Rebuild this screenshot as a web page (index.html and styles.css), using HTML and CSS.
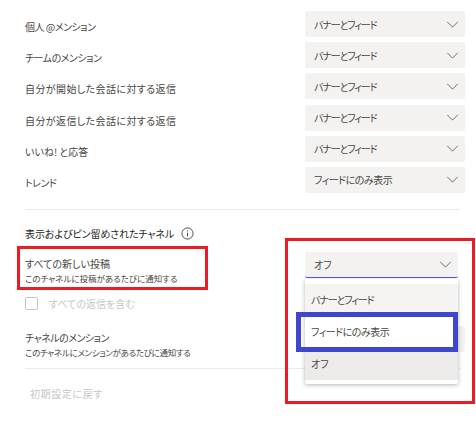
FILE: index.html
```html
<!DOCTYPE html>
<html lang="ja">
<head>
    <meta charset="UTF-8">
    <meta name="viewport" content="width=device-width, initial-scale=1.0">
    <title>通知の設定</title>
    <link rel="stylesheet" href="styles.css">
</head>
<body>
    <div class="page">
        <div class="rows">
            <div class="row"><span class="label tight">個人 @メンション</span><div class="select"><span class="tighter">バナーとフィード</span><svg class="chev" viewBox="0 0 14 8"><path d="M1 1l6 6 6-6"/></svg></div></div>
            <div class="row"><span class="label tight">チームのメンション</span><div class="select"><span class="tighter">バナーとフィード</span><svg class="chev" viewBox="0 0 14 8"><path d="M1 1l6 6 6-6"/></svg></div></div>
            <div class="row"><span class="label wide">自分が開始した会話に対する返信</span><div class="select"><span class="tighter">バナーとフィード</span><svg class="chev" viewBox="0 0 14 8"><path d="M1 1l6 6 6-6"/></svg></div></div>
            <div class="row"><span class="label wide">自分が返信した会話に対する返信</span><div class="select"><span class="tighter">バナーとフィード</span><svg class="chev" viewBox="0 0 14 8"><path d="M1 1l6 6 6-6"/></svg></div></div>
            <div class="row"><span class="label">いいね! と応答</span><div class="select"><span class="tighter">バナーとフィード</span><svg class="chev" viewBox="0 0 14 8"><path d="M1 1l6 6 6-6"/></svg></div></div>
            <div class="row"><span class="label tight">トレンド</span><div class="select"><span class="tight">フィードにのみ表示</span><svg class="chev" viewBox="0 0 14 8"><path d="M1 1l6 6 6-6"/></svg></div></div>
        </div>

        <hr class="divider">

        <h2 class="section-title"><span class="tight-title">表示およびピン留めされたチャネル</span>
            <svg class="info" viewBox="0 0 14 14"><circle cx="7" cy="7" r="6"/><path d="M7 6.2v4M7 3.6v1.2"/></svg>
        </h2>

        <div class="row channel-row">
            <div class="text-block">
                <div class="label">すべての新しい投稿</div>
                <div class="hint">このチャネルに投稿があるたびに通知する</div>
            </div>
            <div class="select select-open"><span>オフ</span><svg class="chev" viewBox="0 0 14 8"><path d="M1 1l6 6 6-6"/></svg></div>
        </div>

        <label class="check-row"><span class="checkbox"></span>すべての返信を含む</label>

        <div class="row mention-row">
            <div class="text-block">
                <div class="label tight">チャネルのメンション</div>
                <div class="hint tight-hint">このチャネルにメンションがあるたびに通知する</div>
            </div>
            <div class="select"></div>
        </div>

        <hr class="divider divider-low">

        <div class="reset">初期設定に戻す</div>

        <!-- dropdown and the annotation boxes lie over the page -->
        <div class="menu">
            <div class="menu-item menu-item-first"><span class="tighter">バナーとフィード</span></div>
            <div class="menu-item"><span class="tight">フィードにのみ表示</span></div>
            <div class="menu-item menu-item-active">オフ</div>
        </div>
        <div class="mark mark-left"></div>
        <div class="mark mark-right"></div>
        <div class="mark mark-blue"></div>
    </div>
</body>
</html>
```

FILE: styles.css
```css
html, body {
    margin: 0;
    padding: 0;
    background-color: #fff;
}
body {
    font-family: "Noto Sans CJK JP", "Noto Sans", sans-serif;
    font-size: 10px;
    font-feature-settings: "palt";
    color: #484644;
}
.page {
    position: relative;
    width: 476px;
    height: 432px;
    overflow: hidden;
    padding: 11px 11px 0 25px;
    box-sizing: border-box;
}
.rows {
    display: flex;
    flex-direction: column;
    gap: 5.2px;
}
.rows .label {
    margin-top: 6px;
}
.row {
    display: flex;
    justify-content: space-between;
    align-items: center;
}
.label {
    line-height: 16px;
}
.hint {
    font-size: 8.5px;
    line-height: 13px;
}
.tighter {
    letter-spacing: -1.1px;
}
.tight {
    letter-spacing: -0.5px;
}
.wide {
    letter-spacing: 0.4px;
}
.tight-hint {
    letter-spacing: -0.3px;
}
.tight-title {
    letter-spacing: -0.1px;
}
.select {
    width: 160px;
    height: 26px;
    box-sizing: border-box;
    padding: 0 6px 0 9px;
    display: flex;
    justify-content: space-between;
    align-items: center;
    flex: none;
    background-color: #f3f2f1;
    border-radius: 2px;
}
.chev {
    width: 13px;
    height: 7px;
    fill: none;
    stroke: #605e5c;
    stroke-width: 1;
}
.divider {
    border: none;
    border-top: 1px solid #edebe9;
    margin: 16px 5px 0 0;
}
.section-title {
    margin: 16px 0 0;
    font-size: 10px;
    font-weight: 400;
    line-height: 16px;
    color: #252423;
    display: flex;
    align-items: center;
    gap: 7px;
}
.info {
    width: 13px;
    height: 13px;
    fill: none;
    stroke: #424242;
    stroke-width: 1;
}
.channel-row {
    margin-top: 10px;
    padding-right: 7px;
    align-items: flex-start;
}
.text-block {
    margin-top: 4px;
}
.select-open {
    width: 153px;
    height: 26px;
    border-bottom: 1px solid #5b5fc7;
}
.check-row {
    display: flex;
    align-items: center;
    gap: 11px;
    margin-top: 11px;
    line-height: 16px;
    color: #c8c6c4;
}
.checkbox {
    width: 11px;
    height: 11px;
    border: 1px solid #c8c6c4;
    border-radius: 2px;
}
.mention-row {
    margin-top: 14px;
    align-items: flex-start;
}
.divider-low {
    margin-top: 9px;
}
.reset {
    margin: 17px 0 0 5px;
    line-height: 16px;
    letter-spacing: 0.6px;
    color: #c8c6c4;
}
.menu {
    position: absolute;
    left: 305px;
    top: 279px;
    width: 153px;
    height: 105px;
    box-sizing: border-box;
    padding: 5px 0 4px;
    background-color: #fff;
    border-radius: 2px;
    box-shadow: 0 1px 4px rgba(0, 0, 0, 0.3);
}
.menu-item {
    height: 32px;
    line-height: 32px;
    padding-left: 6px;
}
.menu-item-first {
    background-color: #f5f4f3;
}
.menu-item-active {
    background-color: #edebe9;
}
.mark {
    position: absolute;
    box-sizing: border-box;
    border: 3px solid #ed1c24;
}
.mark-left {
    left: 17px;
    top: 246px;
    width: 191px;
    height: 44px;
}
.mark-right {
    left: 285px;
    top: 238px;
    width: 190px;
    height: 166px;
}
.mark-blue {
    left: 296px;
    top: 312px;
    width: 162px;
    height: 40px;
    border: 5px solid #3f48cc;
}
```
